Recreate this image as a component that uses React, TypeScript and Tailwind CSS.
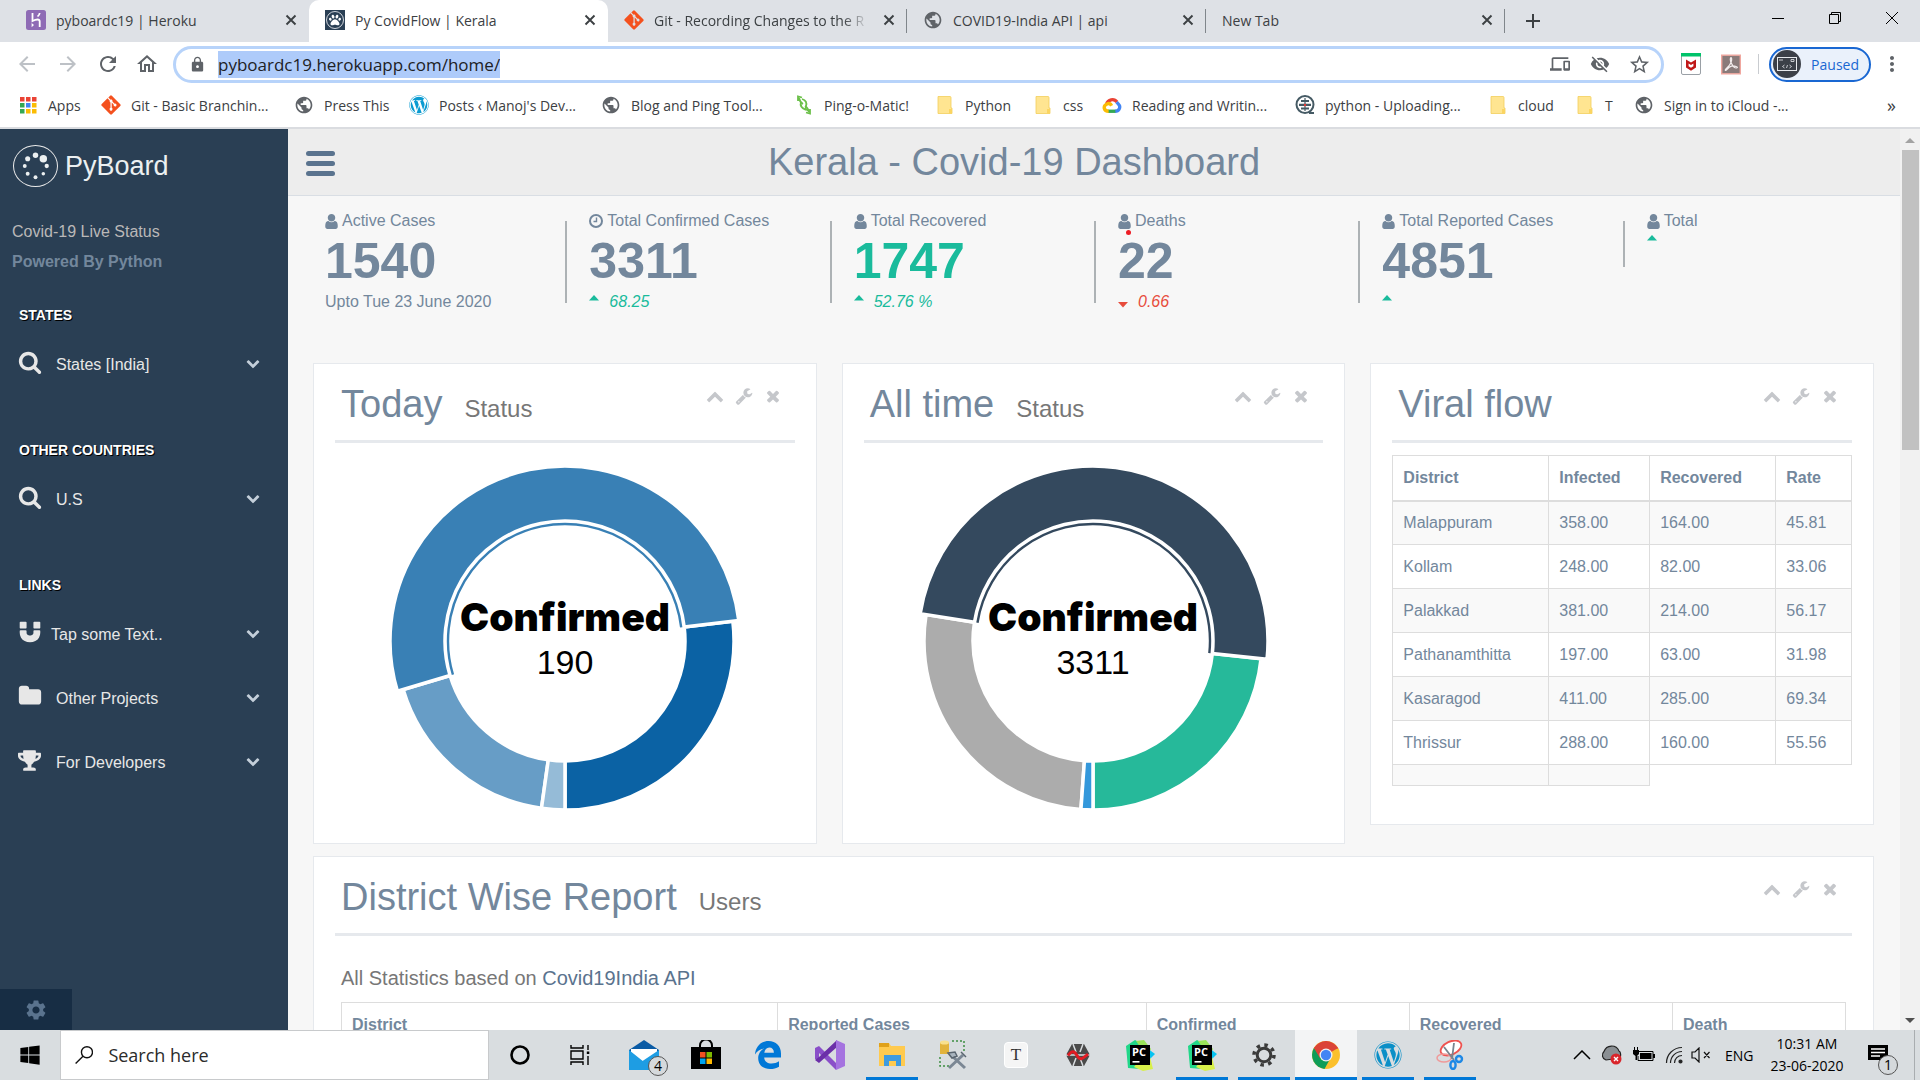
import React from "react";
import { FaGitAlt, FaPaw, FaTrophy, FaWindows, FaWordpress } from "react-icons/fa";
import {
  MdAdd,
  MdArrowBack,
  MdArrowForward,
  MdLock,
  MdMoreVert,
  MdOutlineDevices,
  MdOutlineHome,
  MdPublic,
  MdRefresh,
  MdSettings,
  MdStarBorder,
  MdVisibilityOff,
} from "react-icons/md";

/* ---------- glyphs ---------- */

const glyphs = {
  user: "M1536 1399q0 109-62.5 187t-150.5 78h-854q-88 0-150.5-78t-62.5-187q0-85 8.5-160.5t31.5-152 58.5-131 94-89 134.5-34.5q131 128 313 128t313-128q76 0 134.5 34.5t94 89 58.5 131 31.5 152 8.5 160.5zm-256-887q0 159-112.5 271.5t-271.5 112.5-271.5-112.5-112.5-271.5 112.5-271.5 271.5-112.5 271.5 112.5 112.5 271.5z",
  wrench:
    "M448 1472q0-26-19-45t-45-19-45 19-19 45 19 45 45 19 45-19 19-45zm644-420l-682 682q-37 37-90 37-52 0-91-37l-106-108q-38-36-38-90 0-53 38-91l681-681q39 98 114.5 173.5t173.5 114.5zm634-435q0 39-23 106-47 134-164.5 217.5t-258.5 83.5q-185 0-316.5-131.5t-131.5-316.5 131.5-316.5 316.5-131.5q58 0 121.5 16.5t107.5 46.5q16 11 16 28t-16 28l-293 169v224l193 107q5-3 79-48.5t135.5-81 70.5-35.5q15 0 23.5 10t8.5 25z",
  close:
    "M1490 1322q0 40-28 68l-136 136q-28 28-68 28t-68-28l-294-294-294 294q-28 28-68 28t-68-28l-136-136q-28-28-28-68t28-68l294-294-294-294q-28-28-28-68t28-68l136-136q28-28 68-28t68 28l294 294 294-294q28-28 68-28t68 28l136 136q28 28 28 68t-28 68l-294 294 294 294q28 28 28 68z",
  down: "M1683 808l-742 741q-19 19-45 19t-45-19l-742-741q-19-19-19-45.5t19-45.5l166-165q19-19 45-19t45 19l531 531 531-531q19-19 45-19t45 19l166 165q19 19 19 45.5t-19 45.5z",
  up: "M1683 1331l-166 165q-19 19-45 19t-45-19l-531-531-531 531q-19 19-45 19t-45-19l-166-165q-19-19-19-45.5t19-45.5l742-741q19-19 45-19t45 19l742 741q19 19 19 45.5t-19 45.5z",
  search:
    "M1216 832q0-185-131.5-316.5t-316.5-131.5-316.5 131.5-131.5 316.5 131.5 316.5 316.5 131.5 316.5-131.5 131.5-316.5zm512 832q0 52-38 90t-90 38q-54 0-90-38l-343-342q-179 124-399 124-143 0-273.5-55.5t-225-150-150-225-55.5-273.5 55.5-273.5 150-225 225-150 273.5-55.5 273.5 55.5 225 150 150 225 55.5 273.5q0 220-124 399l343 343q37 37 37 90z",
  folder:
    "M1728 608v704q0 92-66 158t-158 66h-1216q-92 0-158-66t-66-158v-960q0-92 66-158t158-66h320q92 0 158 66t66 158v32h672q92 0 158 66t66 158z",
  magnet:
    "M1664 832v128q0 201-98.500 362t-274 251.500-395.500 90.500-395.500-90.500-274-251.500-98.500-362v-128q0-26 19-45t45-19h384q26 0 45 19t19 45v128q0 52 23.500 90t53.500 57 71 30 64 13 44 2 44-2 64-13 71-30 53.500-57 23.500-90v-128q0-26 19-45t45-19h384q26 0 45 19t19 45zm-1024-640v384q0 26-19 45t-45 19h-384q-26 0-45-19t-19-45v-384q0-26 19-45t45-19h384q26 0 45 19t19 45zm1024 0v384q0 26-19 45t-45 19h-384q-26 0-45-19t-19-45v-384q0-26 19-45t45-19h384q26 0 45 19t19 45z",
};

function Glyph({ name, className, box = "0 0 1792 1792" }: { name: keyof typeof glyphs; className: string; box?: string }) {
  return (
    <svg viewBox={box} className={className} fill="currentColor" aria-hidden="true">
      <path d={glyphs[name]} />
    </svg>
  );
}

function ClockGlyph() {
  return (
    <svg viewBox="0 0 14 14" className="h-3.5 w-3.5" fill="none" stroke="currentColor" strokeWidth="2" aria-hidden="true">
      <circle cx="7" cy="7" r="6" />
      <path d="M7.500 3.500v4H4.500" strokeWidth="1.400" />
    </svg>
  );
}

/* ---------- browser chrome ---------- */

function HerokuIcon() {
  return (
    <svg viewBox="0 0 20 20" className="h-5 w-5">
      <rect width="20" height="20" rx="2.500" fill="#8e6bb5" />
      <path d="M6.500 3v8c2-1 3.500-1.500 5-1.500 1.600 0 2.200.8 2.200 2V17M11.500 6.500c1.300-.8 2-1.900 2.200-3.500" fill="none" stroke="#fff" strokeWidth="1.800" />
      <path d="M5.600 13v4.200l2.400-2.100z" fill="#fff" />
    </svg>
  );
}

function PawIcon() {
  return (
    <span className="flex h-5 w-5 items-center justify-center bg-[#2a3f54] text-white">
      <span className="flex h-[18px] w-[18px] items-center justify-center rounded-full border border-gray-300">
        <FaPaw className="h-3 w-3" />
      </span>
    </span>
  );
}

function GitIcon() {
  return <FaGitAlt className="h-[22px] w-[22px] text-[#f4511e]" />;
}
function GlobeIcon() {
  return <MdPublic className="h-[22px] w-[22px] text-[#5f6368]" />;
}

function TabClose({ label }: { label: string }) {
  return (
    <button aria-label={`Close ${label}`} className="flex h-5 w-5 shrink-0 items-center justify-center text-[#3c4043]">
      <svg viewBox="0 0 12 12" className="h-3 w-3" stroke="currentColor" strokeWidth="1.900">
        <path d="M1.500 1.500l9 9M10.500 1.500l-9 9" />
      </svg>
    </button>
  );
}

function Tab({ icon, title, active, separator, fade }: { icon?: React.ReactNode; title: string; active?: boolean; separator?: boolean; fade?: boolean }) {
  return (
    <div className={active ? "relative flex h-[42px] w-[299px] items-center gap-2.5 rounded-t-[10px] bg-white pb-0.5 pl-4 pr-2" : "relative flex h-[42px] w-[299px] items-center gap-2.5 pb-0.5 pl-4 pr-2"}>
      {icon && <span className="flex w-5 shrink-0 justify-center">{icon}</span>}
      <span className={fade ? "flex-1 whitespace-nowrap [mask-image:linear-gradient(to_right,#000_88%,transparent)]" : "flex-1 whitespace-nowrap"}>{title}</span>
      <TabClose label={title} />
      {separator && <span className="absolute right-0 top-[9px] h-6 w-px bg-[#80868b]" />}
    </div>
  );
}

function TabStrip() {
  return (
    <div className="flex h-[42px] shrink-0 items-center bg-[#dee1e6] pl-[10px] text-[14px] text-[#3c4043]">
      <Tab icon={<HerokuIcon />} title="pyboardc19 | Heroku" />
      <Tab active icon={<PawIcon />} title="Py CovidFlow | Kerala" />
      <Tab separator fade icon={<GitIcon />} title="Git - Recording Changes to the R" />
      <Tab separator icon={<GlobeIcon />} title="COVID19-India API | api" />
      <Tab separator title="New Tab" />
      <button aria-label="New tab" className="ml-4 text-[#3c4043]">
        <MdAdd className="h-6 w-6" />
      </button>
      <div className="ml-auto flex h-9 items-center self-start">
        <button aria-label="Minimize" className="flex w-[57px] justify-center">
          <span className="h-px w-3 bg-black" />
        </button>
        <button aria-label="Restore" className="flex w-[57px] justify-center">
          <svg viewBox="0 0 14 14" className="h-3.5 w-3.5" fill="none" stroke="#000">
            <path d="M1.500 3.500h9v9h-9zM3.500 3.500v-2h9v9h-2" />
          </svg>
        </button>
        <button aria-label="Close window" className="flex w-[57px] justify-center">
          <svg viewBox="0 0 14 14" className="h-3.5 w-3.5" stroke="#000">
            <path d="M1 1l12 12M13 1L1 13" />
          </svg>
        </button>
      </div>
    </div>
  );
}

function McAfeeIcon() {
  return (
    <svg viewBox="0 0 20 22" className="h-[22px] w-5">
      <rect x=".5" y=".5" width="19" height="21" rx="1.500" fill="#fff" stroke="#9aa0a6" />
      <path d="M0 0h20v3.500H0z" fill="#00c36a" />
      <path d="M5 6.500l5 3 5-3v8l-5 3.200-5-3.200zM7.600 10.600v2.700l2.400 1.500 2.400-1.500v-2.700L10 12z" fill="#c01818" fillRule="evenodd" />
    </svg>
  );
}

function AcrobatIcon() {
  return (
    <svg viewBox="0 0 20 20" className="h-[21px] w-5">
      <rect x=".7" y=".7" width="18.600" height="18.600" fill="#8a7b7a" stroke="#f0a79f" strokeWidth="1.400" />
      <path d="M4.500 16C3 15 8.500 12.500 10 8c1-3 .8-4.800 0-4.800S8.800 6 10.500 9c1.500 2.800 4 5 5.500 4.300S14 11 10.500 11.600 5.500 16.500 4.500 16z" fill="none" stroke="#f3eded" strokeWidth="1.200" />
    </svg>
  );
}

function AddressRow() {
  return (
    <div className="flex h-[44px] shrink-0 items-center bg-white pl-[15px] pr-4 text-[#5f6368]">
      <button aria-label="Back" className="mr-[17px] text-[#bdc1c6]"><MdArrowBack className="h-6 w-6" /></button>
      <button aria-label="Forward" className="mr-4 text-[#bdc1c6]"><MdArrowForward className="h-6 w-6" /></button>
      <button aria-label="Reload" className="mr-[15px]"><MdRefresh className="h-6 w-6" /></button>
      <button aria-label="Home" className="mr-[14px]"><MdOutlineHome className="h-6 w-6" /></button>
      <div className="flex h-[37px] flex-1 items-center rounded-full border-[3px] border-[#b7d3fa] pl-[13px] pr-2.5">
        <MdLock className="h-[17px] w-[17px]" />
        <div className="ml-3 flex flex-1">
          <input
            aria-label="Address"
            defaultValue="pyboardc19.herokuapp.com/home/"
            className="field-sizing-content h-[27px] bg-[#aecbfa] text-[17px] text-[#202124] outline-none"
          />
        </div>
        <MdOutlineDevices className="h-5 w-5" />
        <MdVisibilityOff className="ml-5 h-5 w-5" />
        <MdStarBorder className="ml-[18px] h-[23px] w-[23px]" />
      </div>
      <button aria-label="McAfee" className="ml-[17px]"><McAfeeIcon /></button>
      <button aria-label="Acrobat" className="ml-5"><AcrobatIcon /></button>
      <span className="ml-[17px] h-5 w-px bg-[#c9ccd0]" />
      <button className="ml-2.5 flex h-[35px] items-center gap-2.5 rounded-full border-2 border-[#1967d2] bg-[#eaf1fb] pl-[2px] pr-2.5 text-[14px] text-[#1967d2]">
        <svg viewBox="0 0 28 28" className="h-7 w-7">
          <circle cx="14" cy="14" r="14" fill="#3c4048" />
          <rect x="4.500" y="7.500" width="19" height="13" fill="none" stroke="#e8eaed" />
          <path d="M6 10h4M18 9.500h3v2h-3zM11.500 15l-2 1.500 2 1.500M16.500 15l2 1.500-2 1.500M14.500 15l-1 3" stroke="#e8eaed" fill="none" strokeWidth=".8" />
        </svg>
        Paused
      </button>
      <button aria-label="Menu" className="ml-[9px]"><MdMoreVert className="h-6 w-6" /></button>
    </div>
  );
}

function AppsIcon() {
  const colors = ["#ea4335", "#ea4335", "#ea4335", "#34a853", "#4285f4", "#fbbc04", "#34a853", "#fbbc04", "#fbbc04"];
  return (
    <svg viewBox="0 0 17 17" className="h-[17px] w-[17px]">
      {colors.map((c, i) => (
        <rect key={i} x={(i % 3) * 6} y={Math.floor(i / 3) * 6} width="4.500" height="4.500" fill={c} />
      ))}
    </svg>
  );
}
function FolderIcon() {
  return (
    <svg viewBox="0 0 16 18" className="h-[18px] w-4">
      <path d="M1 .5h12a1 1 0 011 1V12h1v5.500H1z" fill="#ffe591" stroke="#f3ce5b" strokeWidth=".8" />
      <path d="M12 17.500V13h3v4.500z" fill="#fbd561" />
    </svg>
  );
}
function WpIcon() {
  return <FaWordpress className="h-5 w-5 text-[#0a9bd1]" />;
}
function PingIcon() {
  return (
    <svg viewBox="0 0 16 20" className="h-5 w-4" fill="none" stroke="#6cc04a" strokeWidth="1.800">
      <path d="M2 6V1.500l4 1M3 3c1 4 2 5 4 6M14 14v4.500l-4-1M13 17c-1-4-2-5-4-6" />
      <path d="M6 4c4 1 5 4 4 7s0 4 3 5M5 7c-1 3 0 6 5 8" />
    </svg>
  );
}
function CloudIcon() {
  return (
    <svg viewBox="0 0 24 20" className="h-5 w-5" fill="none" strokeWidth="4">
      <path d="M5.500 9A7 7 0 0118 6.500" stroke="#ea4335" />
      <path d="M17.500 6.500c3 3 5 5 3 8.500-1 2-3 2.500-5 2.500" stroke="#4285f4" />
      <path d="M16 17.500H7" stroke="#34a853" />
      <path d="M8 17.500c-6 0-7-6-2.500-8.500 3-1.500 5 0 6 2" stroke="#fbbc04" />
    </svg>
  );
}
function CrawlerIcon() {
  return (
    <svg viewBox="0 0 20 20" className="h-5 w-5" fill="none" stroke="#455a64">
      <circle cx="10" cy="9.500" r="8.500" strokeWidth="2" />
      <path d="M6 6h8M4 9.800h12M6 13.500h8" strokeWidth="2.200" />
      <path d="M10 3v13" strokeWidth="1.200" />
      <path d="M14 18h5" strokeWidth="2" />
      <circle cx="10" cy="10" r="1.200" fill="#e53935" stroke="none" />
    </svg>
  );
}

const bookmarks = [
  { label: "Apps", icon: <AppsIcon />, width: "w-[83px]" },
  { label: "Git - Basic Branchin...", icon: <GitIcon />, width: "w-[193px]" },
  { label: "Press This", icon: <GlobeIcon />, width: "w-[115px]" },
  { label: "Posts ‹ Manoj's Dev...", icon: <WpIcon />, width: "w-[192px]" },
  { label: "Blog and Ping Tool...", icon: <GlobeIcon />, width: "w-[193px]" },
  { label: "Ping-o-Matic!", icon: <PingIcon />, width: "w-[141px]" },
  { label: "Python", icon: <FolderIcon />, width: "w-[98px]" },
  { label: "css", icon: <FolderIcon />, width: "w-[69px]" },
  { label: "Reading and Writin...", icon: <CloudIcon />, width: "w-[193px]" },
  { label: "python - Uploading...", icon: <CrawlerIcon />, width: "w-[193px]" },
  { label: "cloud", icon: <FolderIcon />, width: "w-[87px]" },
  { label: "T", icon: <FolderIcon />, width: "w-[59px]" },
  { label: "Sign in to iCloud -...", icon: <GlobeIcon />, width: "w-[170px]" },
];

function BookmarksBar() {
  return (
    <nav className="flex h-[43px] shrink-0 items-center border-b-2 border-[#dadce0] bg-white pb-[3px] pl-[18px] pr-[24px] text-[14px] text-[#3c4043]">
      {bookmarks.map((b) => (
        <a key={b.label} href="#" className={`${b.width} flex shrink-0 items-center gap-2.5 whitespace-nowrap`}>
          <span className="flex w-5 shrink-0 justify-center">{b.icon}</span>
          {b.label}
        </a>
      ))}
      <button aria-label="More bookmarks" className="ml-auto text-[18px] leading-none">»</button>
    </nav>
  );
}

/* ---------- sidebar ---------- */

function BrandLogo() {
  const dots = [
    [22, 9, 2.8], [30, 12.500, 3.800], [33.500, 20, 2.200], [30, 28, 1.800],
    [22, 31.500, 2], [14, 28, 2], [11, 20, 2], [14, 12.500, 2.600],
  ];
  return (
    <span className="flex h-[42px] w-[45px] items-center justify-center rounded-[50%] border border-[#eaeaea]">
      <svg viewBox="0 0 44 40" className="h-10 w-11" fill="#ecf0f1">
        {dots.map(([x, y, r], i) => (
          <circle key={i} cx={x} cy={y} r={r} />
        ))}
      </svg>
    </span>
  );
}

function MenuSection({ title, children }: { title: string; children: React.ReactNode }) {
  return (
    <section>
      <h3 className="pl-[19px] text-[14px] font-bold leading-5 text-white [text-shadow:1px_1px_#000]">{title}</h3>
      <ul className="pt-1.5">{children}</ul>
    </section>
  );
}

function MenuItem({ icon, label, tight }: { icon: React.ReactNode; label: string; tight?: boolean }) {
  return (
    <li>
      <a href="#" className="flex h-16 items-center pl-[18px] pr-[28px] text-[#e7e7e7]">
        <span className={tight ? "flex h-6 w-[33px] items-center pb-0.5" : "flex h-6 w-[38px] items-center pb-0.5"}>{icon}</span>
        <span className="pt-[3px]">{label}</span>
        <Glyph name="down" className="ml-auto h-[14px] w-[14px] text-[#c4cfda]" />
      </a>
    </li>
  );
}

function Sidebar() {
  return (
    <aside className="flex w-72 shrink-0 flex-col bg-[#2a3f54] text-[16px]">
      <a href="#" className="flex items-center gap-[7px] pl-[13px] pt-4 text-[27px] text-[#ecf0f1]">
        <BrandLogo />
        PyBoard
      </a>
      <p className="pl-3 pt-[30px] leading-[30px] text-[#bab8b8]">Covid-19 Live Status</p>
      <p className="pl-3 font-bold leading-[30px] text-[#73879c]">Powered By Python</p>
      <div className="flex flex-col gap-[45px] pt-7">
        <MenuSection title="STATES">
          <MenuItem icon={<Glyph name="search" className="h-6 w-6" />} label="States [India]" />
        </MenuSection>
        <MenuSection title="OTHER COUNTRIES">
          <MenuItem icon={<Glyph name="search" className="h-6 w-6" />} label="U.S" />
        </MenuSection>
        <MenuSection title="LINKS">
          <MenuItem tight icon={<Glyph name="magnet" className="h-6 w-6" />} label="Tap some Text.." />
          <MenuItem icon={<Glyph name="folder" className="h-6 w-6" />} label="Other Projects" />
          <MenuItem icon={<FaTrophy className="h-[21px] w-[23px]" />} label="For Developers" />
        </MenuSection>
      </div>
      <button aria-label="Settings" className="mt-auto flex h-[41px] w-[72px] items-center justify-center bg-[#172d44] text-[#5a738e]">
        <MdSettings className="h-6 w-6" />
      </button>
    </aside>
  );
}

/* ---------- dashboard ---------- */

type Trend = { dir: "up" | "down"; text?: string };
type Stat = { label: string; value?: string; tone?: string; note?: string; trend?: Trend; clock?: boolean };

const stats: Stat[] = [
  { label: "Active Cases", value: "1540", note: "Upto Tue 23 June 2020" },
  { label: "Total Confirmed Cases", value: "3311", trend: { dir: "up", text: "68.25" }, clock: true },
  { label: "Total Recovered", value: "1747", tone: "text-[#1abb9c]", trend: { dir: "up", text: "52.76 %" } },
  { label: "Deaths", value: "22", trend: { dir: "down", text: "0.66" } },
  { label: "Total Reported Cases", value: "4851", trend: { dir: "up" } },
  { label: "Total", trend: { dir: "up" } },
];

function TrendLine({ dir, text }: Trend) {
  return (
    <div className={dir === "up" ? "flex h-[22px] gap-2.5 text-[#1abb9c]" : "flex h-[22px] gap-2.5 text-[#e74c3c]"}>
      <svg viewBox="0 0 10 22" className="h-[22px] w-2.5" fill="currentColor" aria-hidden="true">
        <path d={dir === "up" ? "M0 9.500h10L5 4z" : "M0 11h10l-5 5.500z"} />
      </svg>
      <span className="italic leading-[22px]">{text}</span>
    </div>
  );
}

function StatTile({ stat, first }: { stat: Stat; first: boolean }) {
  const line = first ? "bg-transparent" : "bg-[#adb2b5]";
  const height = stat.value ? "h-[82px]" : "h-[46px]";
  return (
    <div className="relative flex gap-[22px]">
      <span className={`${line} ${height} mt-2.5 w-[2px] shrink-0`} />
      <div>
        <div className="flex h-5 items-center gap-1 whitespace-nowrap leading-5">
          {stat.clock ? <ClockGlyph /> : <Glyph name="user" box="256 128 1280 1536" className="h-[15px] w-[13px]" />}
          {stat.label}
        </div>
        {stat.value && <div className={`${stat.tone ?? ""} text-[50px] font-bold leading-[60px]`}>{stat.value}</div>}
        {stat.note && <div className="leading-[22px]">{stat.note}</div>}
        {stat.trend && <TrendLine {...stat.trend} />}
      </div>
      {stat.label === "Deaths" && <span className="absolute left-8 top-[19px] h-[5px] w-[5px] rounded-full bg-[#ed1c24]" />}
    </div>
  );
}

function Panel({ title, sub, children }: { title: string; sub?: string; children: React.ReactNode }) {
  return (
    <section className="border border-[#e6e9ed] bg-white px-[21px] pt-[13px]">
      <header className="flex h-[66px] items-start border-b-[3px] border-[#e6e9ed] pl-1.5 pr-[13px] pt-[3px]">
        <h2 className="flex items-baseline gap-[22px] whitespace-nowrap text-[38px] leading-[48px]">
          {title}
          {sub && <small className="text-[24px] text-[#777]">{sub}</small>}
        </h2>
        <div className="ml-auto flex items-center gap-[11px] pt-[7px] text-[#c5c7cb]">
          <button aria-label="Collapse"><Glyph name="up" className="h-[18px] w-[18px]" /></button>
          <button aria-label="Options"><Glyph name="wrench" className="h-[18px] w-[18px]" /></button>
          <button aria-label="Close"><Glyph name="close" className="h-[18px] w-[18px]" /></button>
        </div>
      </header>
      {children}
    </section>
  );
}

type Slice = { from: number; to: number; color: string; selected?: boolean };

const point = (radius: number, deg: number) => {
  const a = (deg * Math.PI) / 180;
  return `${180 + radius * Math.cos(a)} ${180 + radius * Math.sin(a)}`;
};

const ring = ({ from, to, selected }: Slice) => {
  const outer = selected ? 175 : 169;
  const inner = 120;
  const large = to - from > 180 ? 1 : 0;
  return `M${point(outer, from)}A${outer} ${outer} 0 ${large} 1 ${point(outer, to)}L${point(inner, to)}A${inner} ${inner} 0 ${large} 0 ${point(inner, from)}Z`;
};

function Donut({ slices, label, value }: { slices: Slice[]; label: string; value: string }) {
  const chosen = slices.find((s) => s.selected)!;
  const large = chosen.to - chosen.from > 180 ? 1 : 0;
  return (
    <div className="flex justify-center pb-[22px] pt-[18px]">
      <svg viewBox="0 0 360 360" className="h-[360px] w-[360px]" role="img" aria-label={`${label} ${value}`}>
        {slices.map((s) => (
          <path key={s.color} d={ring(s)} fill={s.color} stroke="#fff" strokeWidth="3.500" />
        ))}
        <path
          d={`M${point(117, chosen.from)}A117 117 0 ${large} 1 ${point(117, chosen.to)}`}
          fill="none"
          stroke={chosen.color}
          strokeWidth="2.400"
        />
        <text x="180" y="170" textAnchor="middle" className="font-['Inter',sans-serif] text-[39px] font-black">{label}</text>
        <text x="180" y="213" textAnchor="middle" className="text-[34px]">{value}</text>
      </svg>
    </div>
  );
}

const todaySlices: Slice[] = [
  { from: -6.700, to: 90, color: "#0b62a4" },
  { from: 98, to: 163.300, color: "#679dc6" },
  { from: 90, to: 98, color: "#95bbd7" },
  { from: 163.300, to: 353.300, color: "#3980b5", selected: true },
];
const allTimeSlices: Slice[] = [
  { from: 6, to: 90, color: "#26b99a" },
  { from: 94.100, to: 189, color: "#acacac" },
  { from: 90, to: 94.100, color: "#3498db" },
  { from: 189, to: 366, color: "#34495e", selected: true },
];

const flow = [
  ["Malappuram", "358.00", "164.00", "45.81"],
  ["Kollam", "248.00", "82.00", "33.06"],
  ["Palakkad", "381.00", "214.00", "56.17"],
  ["Pathanamthitta", "197.00", "63.00", "31.98"],
  ["Kasaragod", "411.00", "285.00", "69.34"],
  ["Thrissur", "288.00", "160.00", "55.56"],
];

function FlowTable() {
  return (
    <div className="pb-[38px] pt-3">
      <table className="w-full table-fixed border-collapse text-left [&_td]:border [&_td]:border-[#ddd] [&_td]:px-2.5 [&_th]:border [&_th]:border-b-2 [&_th]:border-[#ddd] [&_th]:px-2.5">
        <thead>
          <tr className="h-[45px]">
            <th className="w-[34%]">District</th>
            <th className="w-[22%]">Infected</th>
            <th className="w-[27.5%]">Recovered</th>
            <th className="w-[16.5%]">Rate</th>
          </tr>
        </thead>
        <tbody>
          {flow.map((row, i) => (
            <tr key={row[0]} className={i % 2 === 0 ? "h-11 bg-[#f9f9f9]" : "h-11"}>
              {row.map((cell) => (
                <td key={cell}>{cell}</td>
              ))}
            </tr>
          ))}
          <tr className="h-[21px]">
            <td className="bg-[#f9f9f9]" />
            <td className="bg-[#f9f9f9]" />
          </tr>
        </tbody>
      </table>
    </div>
  );
}

function DistrictReport() {
  return (
    <div className="px-1.5 pt-[30px]">
      <p className="text-[20px] leading-[24px] text-[#777]">
        All Statistics based on <a href="#" className="text-[#5a738e]">Covid19India API</a>
      </p>
      <table className="mt-3 w-full table-fixed border-collapse text-left [&_th]:border [&_th]:border-[#ddd] [&_th]:px-2.5">
        <thead>
          <tr className="h-[45px]">
            <th className="w-[29%]">District</th>
            <th className="w-[24.5%]">Reported Cases</th>
            <th className="w-[17.5%]">Confirmed</th>
            <th className="w-[17.5%]">Recovered</th>
            <th className="w-[11.5%]">Death</th>
          </tr>
        </thead>
      </table>
    </div>
  );
}

function Dashboard() {
  return (
    <main className="flex-1 overflow-hidden bg-[#f7f7f7] text-[16px] text-[#73879c]">
      <div className="flex h-[67px] items-center border-b border-[#d9dee4] bg-[#ededed] pl-[18px] pr-[50px]">
        <button aria-label="Toggle menu" className="mt-0.5 flex w-[29px] flex-col gap-[5px]">
          <span className="h-[5px] rounded-sm bg-[#5a738e]" />
          <span className="h-[5px] rounded-sm bg-[#5a738e]" />
          <span className="h-[5px] rounded-sm bg-[#5a738e]" />
        </button>
        <h1 className="flex-1 pr-[157px] text-center text-[38px] leading-[48px]">Kerala - Covid-19 Dashboard</h1>
      </div>
      <div className="grid grid-cols-6 px-[13px] pt-[15px]">
        {stats.map((s, i) => (
          <StatTile key={s.label} stat={s} first={i === 0} />
        ))}
      </div>
      <div className="mt-[50px] grid grid-cols-3 items-start gap-x-[25px] pl-[25px] pr-[26px]">
        <Panel title="Today" sub="Status">
          <Donut slices={todaySlices} label="Confirmed" value="190" />
        </Panel>
        <Panel title="All time" sub="Status">
          <Donut slices={allTimeSlices} label="Confirmed" value="3311" />
        </Panel>
        <Panel title="Viral flow">
          <FlowTable />
        </Panel>
      </div>
      <div className="mt-3 pl-[25px] pr-[26px]">
        <Panel title="District Wise Report" sub="Users">
          <DistrictReport />
        </Panel>
      </div>
    </main>
  );
}

function Scrollbar() {
  return (
    <div className="flex w-5 shrink-0 flex-col items-center bg-[#f1f1f1]">
      <svg viewBox="0 0 20 21" className="h-[21px] w-5" fill="#a3a3a3"><path d="M5 14h10l-5-5z" /></svg>
      <span className="h-[300px] w-[17px] bg-[#c1c1c1]" />
      <svg viewBox="0 0 20 21" className="mt-auto h-[21px] w-5" fill="#505050"><path d="M5 9h10l-5 5z" /></svg>
    </div>
  );
}

/* ---------- taskbar ---------- */

function PyCharmIcon() {
  return (
    <svg viewBox="0 0 32 32" className="h-8 w-8">
      <path d="M2 7l9-6 9 5-4 24-12-1z" fill="#21d789" />
      <path d="M12 2l8-1 7 9-4 8z" fill="#9be35a" />
      <path d="M23 9l8 6-5 5z" fill="#07c3f2" />
      <path d="M10 28l14-18 5 20-10 2z" fill="#d8f04a" />
      <rect x="6" y="6" width="20" height="20" fill="#000" />
      <text x="8" y="17" fill="#fff" className="font-['Open_Sans',sans-serif] text-[11px] font-bold">PC</text>
      <path d="M8.500 22h7v1.600h-7z" fill="#fff" />
    </svg>
  );
}

function ChromeIcon() {
  return (
    <svg viewBox="0 0 28 28" className="h-7 w-7">
      <circle cx="14" cy="14" r="14" fill="#fbc02d" />
      <path d="M14 14L1.900 7A14 14 0 0126.100 7z" fill="#db4437" />
      <path d="M1.900 7A14 14 0 0012.500 27.900L18 18z" fill="#0f9d58" />
      <path d="M14 7.500h12.400A14 14 0 0026 7L14 0 1.900 7l6 10z" fill="#db4437" />
      <circle cx="14" cy="14" r="6.500" fill="#f1f1f1" />
      <circle cx="14" cy="14" r="5.200" fill="#4285f4" />
    </svg>
  );
}

function EdgeIcon() {
  return (
    <svg viewBox="0 0 26 28" className="h-7 w-[26px]">
      <path
        d="M0 13.500C.6 5.500 6 0 13.500 0 21 0 26 5 26 12.500v4H9.200c.2 4.200 3.500 6 7.300 6 2.800 0 5.200-.8 7.500-2.200v5.400c-2.600 1.500-5.700 2.300-9 2.300C8 28 3.200 23.800 3.200 17.300c0-4.200 2.200-7.800 5.800-9.800C5.200 8 1.800 10.200 0 13.500zm9.300-1.700h9.600c0-3.300-1.700-5.300-4.700-5.300-2.600 0-4.500 2.200-4.900 5.300z"
        fill="#0078d7"
        fillRule="evenodd"
      />
    </svg>
  );
}

const tasks: { label: string; icon: React.ReactNode; state?: "open" | "active" }[] = [
  { label: "Cortana", icon: <svg viewBox="0 0 20 20" className="h-5 w-5"><circle cx="10" cy="10" r="8.500" fill="none" stroke="#000" strokeWidth="2.600" /></svg> },
  {
    label: "Task view",
    icon: (
      <svg viewBox="0 0 22 22" className="mr-1 h-[22px] w-[22px]" fill="none" stroke="#000" strokeWidth="1.400">
        <path d="M2 1v3h12V1M2 7h12v8H2zM2 21v-3h12v3M19 1v5M19 12v9" />
        <path d="M17.800 7.500h2.500V10h-2.500z" fill="#000" stroke="none" />
      </svg>
    ),
  },
  {
    label: "Mail",
    icon: (
      <span className="relative">
        <svg viewBox="0 0 32 30" className="h-[30px] w-8">
          <path d="M1 10L16 0l15 10v20H1z" fill="#0a5ba5" />
          <path d="M3 9h26v8L16 22 3 16z" fill="#fff" />
          <path d="M1 10l15 12L1 30zM16 20l15-10v20H1z" fill="#1e9de3" />
        </svg>
        <span className="absolute -bottom-1.5 -right-2 flex h-5 w-5 items-center justify-center rounded-full border border-[#555] bg-[#d5d9dc] text-[14px] leading-none text-black">4</span>
      </span>
    ),
  },
  {
    label: "Store",
    icon: (
      <svg viewBox="0 0 30 30" className="h-[30px] w-[30px]">
        <path d="M9 9V5.500a6 6 0 0112 0V9" fill="none" stroke="#000" strokeWidth="2" />
        <path d="M0 7h30v22H0z" fill="#000" />
        <path d="M9 12h5.500v5.500H9z" fill="#f25022" /><path d="M15.500 12H21v5.500h-5.500z" fill="#7fba00" />
        <path d="M9 18.500h5.500V24H9z" fill="#00a4ef" /><path d="M15.500 18.500H21V24h-5.500z" fill="#ffb900" />
      </svg>
    ),
  },
  { label: "Edge", icon: <EdgeIcon /> },
  {
    label: "Visual Studio",
    icon: (
      <svg viewBox="0 0 30 30" className="h-[30px] w-[30px]">
        <path d="M0 8l4-2 18 18-1 6L4 13v8l-4-2z" fill="#8a4fc9" />
        <path d="M0 20l4 3L22 7V0L4 17z" fill="#6b2fa8" />
        <path d="M21 0l9 4v22l-9 4z" fill="#a573e0" />
      </svg>
    ),
  },
  {
    label: "File Explorer",
    state: "open",
    icon: (
      <svg viewBox="0 0 28 26" className="h-[26px] w-7">
        <path d="M1 1h10l2 3h14v20H1z" fill="#ffca4f" /><path d="M1 1h10v4H1z" fill="#e0a11b" />
        <path d="M6 24V13h17v11h-5v-5h-7v5z" fill="#3f9be0" />
      </svg>
    ),
  },
  {
    label: "Tools",
    icon: (
      <svg viewBox="0 0 30 30" className="h-[30px] w-[30px]">
        <path d="M1 2h9v12H1z" fill="#e2b33c" /><ellipse cx="5.500" cy="2.500" rx="4.500" ry="2" fill="#f8e08e" />
        <path d="M13 1h12v10M1 17v9h9" fill="none" stroke="#3e8e41" strokeDasharray="2 2" strokeWidth="1.500" />
        <path d="M10 28l14-13M12 15l14 13" stroke="#7b8794" strokeWidth="3" /><path d="M9 13l7-1 2 4-5 2zM22 12l5 5" stroke="#5a6570" strokeWidth="1.500" fill="#a9b4be" />
      </svg>
    ),
  },
  {
    label: "Typora",
    icon: <span className="flex h-[26px] w-6 items-center justify-center rounded-sm border border-white bg-[#f5f5f5] font-['Liberation_Serif',serif] text-[17px] text-[#333]">T</span>,
  },
  {
    label: "Monitor",
    icon: (
      <svg viewBox="0 0 24 24" className="h-6 w-6">
        <path d="M6 1h12l6 11-6 11H6L0 12z" fill="#4a4a4a" /><path d="M7 1l3 8M17 1l-3 8M7 23l3-8M17 23l-3-8M0 12h24" stroke="#d9dde0" strokeWidth="1.500" />
        <path d="M2 12.500c4-5 6-5 9 0s5 4 11-1.500" fill="none" stroke="#e31b23" strokeWidth="3" />
      </svg>
    ),
  },
  { label: "PyCharm", icon: <PyCharmIcon /> },
  { label: "PyCharm project", icon: <PyCharmIcon />, state: "open" },
  {
    label: "Settings",
    state: "open",
    icon: (
      <svg viewBox="0 0 24 24" className="h-6 w-6" fill="none" stroke="#3b3b3b">
        <circle cx="12" cy="12" r="6.800" strokeWidth="3" />
        <circle cx="12" cy="12" r="10" strokeWidth="3.500" strokeDasharray="3.500 4.354" />
      </svg>
    ),
  },
  { label: "Chrome", icon: <ChromeIcon />, state: "active" },
  { label: "WordPress", icon: <FaWordpress className="h-7 w-7 text-[#0a8fc7]" />, state: "open" },
  {
    label: "Snipping Tool",
    state: "open",
    icon: (
      <svg viewBox="0 0 28 30" className="h-[30px] w-7" fill="none">
        <ellipse cx="15" cy="8" rx="11" ry="6.500" transform="rotate(-25 15 8)" fill="#fff" stroke="#ef5350" strokeWidth="1.800" />
        <ellipse cx="8" cy="18" rx="7" ry="4" stroke="#ef9a9a" strokeWidth="1.500" />
        <path d="M8 7l10 13M18 3l-2 16" stroke="#78848f" strokeWidth="1.800" />
        <circle cx="23" cy="19" r="3" stroke="#1e88e5" strokeWidth="2.400" /><ellipse cx="17" cy="25" rx="2.600" ry="4" stroke="#1e88e5" strokeWidth="2.400" />
      </svg>
    ),
  },
];

function TaskButton({ label, icon, state }: (typeof tasks)[number]) {
  return (
    <button aria-label={label} className={state === "active" ? "relative flex h-full w-[62px] items-center justify-center bg-[#f3f4f5]" : "relative flex h-full w-[62px] items-center justify-center"}>
      {icon}
      {state && <span className={state === "active" ? "absolute inset-x-0 bottom-0 h-[3px] bg-[#0078d7]" : "absolute inset-x-[5px] bottom-0 h-[3px] bg-[#0078d7]"} />}
    </button>
  );
}

function Tray() {
  return (
    <div className="ml-auto flex h-full items-center text-[14px] text-black">
      <svg viewBox="0 0 18 10" className="h-2.5 w-[18px]" fill="none" stroke="#000" strokeWidth="1.500"><path d="M1 9l8-8 8 8" /></svg>
      <svg viewBox="0 0 22 20" className="ml-2.5 h-5 w-[22px]">
        <path d="M5 15a5 5 0 01-2-8.500A8 8 0 0118 6c2 1 2 5 1 7z" fill="#8a8f93" stroke="#222" strokeWidth="1.200" />
        <circle cx="15" cy="14" r="5.500" fill="#d9252b" /><path d="M13 12l4 4M17 12l-4 4" stroke="#fff" strokeWidth="1.400" />
      </svg>
      <svg viewBox="0 0 22 16" className="ml-2.5 h-4 w-[22px]">
        <path d="M6 4.500h14v9H5V9" fill="none" stroke="#000" /><path d="M7 6h11.500v6H7zM20 7h2v4h-2zM0 3h6v4L4 9v4H2.500V9L0 7zM1 0h1v3H1zM4 0h1v3H4z" />
      </svg>
      <svg viewBox="0 0 18 18" className="ml-2.5 h-[18px] w-[18px]" fill="none" stroke="#222" strokeWidth="1.200">
        <path d="M1.500 17A15.500 15.500 0 0117 1.500M5.500 17A11.500 11.500 0 0117 5.500M9.500 17A7.500 7.500 0 0117 9.500" /><circle cx="15.500" cy="15.500" r="1.500" fill="#222" />
      </svg>
      <svg viewBox="0 0 20 16" className="ml-2 h-4 w-5" fill="none" stroke="#111" strokeWidth="1.200"><path d="M1 5h3l4-4v14l-4-4H1zM13 5l5.500 6M18.500 5L13 11" /></svg>
      <span className="ml-3.5 w-[29px]">ENG</span>
      <span className="ml-3.5 w-[78px] text-center leading-[22px]">10:31 AM<br />23-06-2020</span>
      <span className="relative ml-[22px] mr-[26px]">
        <svg viewBox="0 0 20 20" className="h-5 w-5"><path d="M0 0h20v15h-4v5l-5-5H0z" /><path d="M3 4h14M3 7.500h14M3 11h9" stroke="#fff" strokeWidth="1.500" /></svg>
        <span className="absolute -bottom-2.5 -right-2.5 flex h-5 w-5 items-center justify-center rounded-full border border-[#555] bg-[#d5d9dc] text-[14px] leading-none">1</span>
      </span>
      <span className="h-full w-1.5 border-l border-[#a9adb0]" />
    </div>
  );
}

function Taskbar() {
  return (
    <footer className="flex h-[50px] shrink-0 items-center bg-[#d9dde0]">
      <button aria-label="Start" className="flex h-full w-[60px] items-center justify-center"><FaWindows className="h-[22px] w-[22px] text-black" /></button>
      <label className="flex h-full w-[429px] items-center gap-[15px] border border-[#c8cacc] bg-white pl-3.5">
        <svg viewBox="0 0 20 20" className="h-5 w-5" fill="none" stroke="#111" strokeWidth="1.500"><circle cx="13" cy="7" r="6" /><path d="M8.700 11.300L.7 19.300" /></svg>
        <input aria-label="Search" placeholder="Search here" className="w-full bg-transparent text-[18px] outline-none placeholder:text-[#2b2b2b]" />
      </label>
      {tasks.map((t) => (
        <TaskButton key={t.label} {...t} />
      ))}
      <Tray />
    </footer>
  );
}

export default function App() {
  return (
    <div className="flex h-screen flex-col overflow-hidden bg-white font-['Open_Sans','Noto_Sans',sans-serif]">
      <TabStrip />
      <AddressRow />
      <BookmarksBar />
      <div className="flex min-h-0 flex-1 font-['Liberation_Sans',Arial,sans-serif]">
        <Sidebar />
        <Dashboard />
        <Scrollbar />
      </div>
      <Taskbar />
    </div>
  );
}
